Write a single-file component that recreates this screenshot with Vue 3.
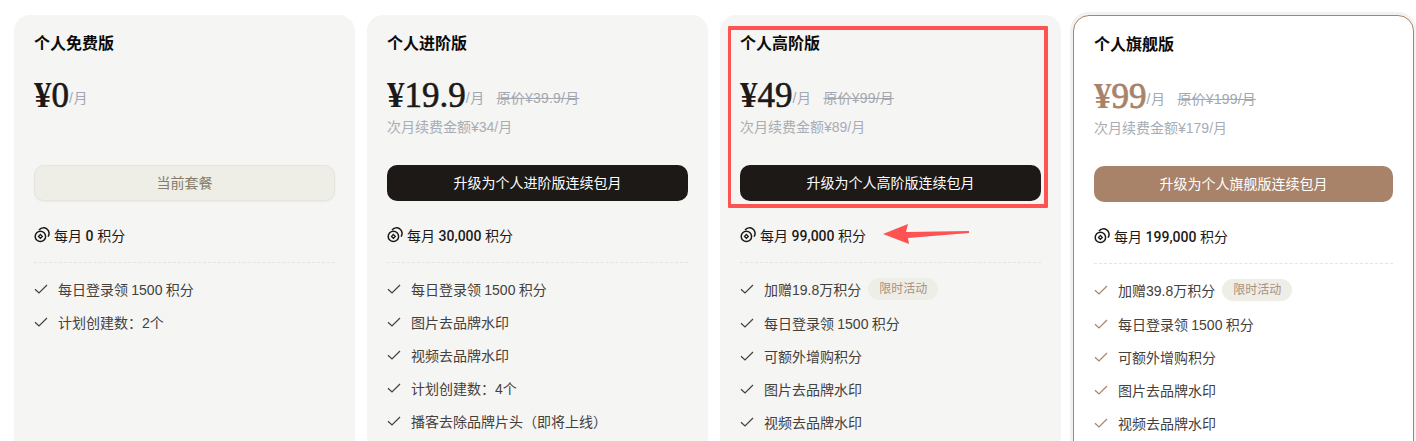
<script setup>
const plans = [
	{
		name: "个人免费版",
		price: "0",
		renew: "",
		action: "当前套餐",
		credits: "0",
		features: [{ text: "每日登录领 1500 积分" }, { text: "计划创建数：2个" }],
		kind: "current",
	},
	{
		name: "个人进阶版",
		price: "19.9",
		was: "原价¥39.9/月",
		renew: "次月续费金额¥34/月",
		action: "升级为个人进阶版连续包月",
		credits: "30,000",
		features: [
			{ text: "每日登录领 1500 积分" },
			{ text: "图片去品牌水印" },
			{ text: "视频去品牌水印" },
			{ text: "计划创建数：4个" },
			{ text: "播客去除品牌片头（即将上线）" },
		],
		kind: "dark",
	},
	{
		name: "个人高阶版",
		price: "49",
		was: "原价¥99/月",
		renew: "次月续费金额¥89/月",
		action: "升级为个人高阶版连续包月",
		credits: "99,000",
		features: [
			{ text: "加赠19.8万积分", tag: "限时活动" },
			{ text: "每日登录领 1500 积分" },
			{ text: "可额外增购积分" },
			{ text: "图片去品牌水印" },
			{ text: "视频去品牌水印" },
		],
		kind: "dark",
	},
	{
		name: "个人旗舰版",
		price: "99",
		was: "原价¥199/月",
		renew: "次月续费金额¥179/月",
		action: "升级为个人旗舰版连续包月",
		credits: "199,000",
		features: [
			{ text: "加赠39.8万积分", tag: "限时活动" },
			{ text: "每日登录领 1500 积分" },
			{ text: "可额外增购积分" },
			{ text: "图片去品牌水印" },
			{ text: "视频去品牌水印" },
		],
		kind: "gold",
	},
]
</script>

<template>
	<div class="page">
		<section v-for="plan in plans" :key="plan.name" class="card" :class="`card--${plan.kind}`">
			<h3 class="name">{{ plan.name }}</h3>
			<div class="price-row">
				<span class="price"><i class="yen">¥</i>{{ plan.price }}</span>
				<span class="unit">/月</span>
				<s v-if="plan.was" class="was">{{ plan.was }}</s>
			</div>
			<div class="renew">{{ plan.renew }}</div>
			<button class="action" type="button">{{ plan.action }}</button>
			<div class="credits">
				<svg class="coin" viewBox="0 0 16 16" fill="none" stroke="currentColor">
					<circle cx="6.4" cy="9.4" r="5.2" stroke-width="1.5" />
					<path d="M6.4 7.5 8.3 9.4 6.4 11.3 4.5 9.4Z" stroke-width="1.3" />
					<path d="M5 3.1A5.4 5.4 0 0 1 14 9.6" stroke-width="1.5" />
				</svg>
				<span>每月 <b>{{ plan.credits }}</b> 积分</span>
			</div>
			<ul class="features">
				<li v-for="item in plan.features" :key="item.text">
					<svg class="check" viewBox="0 0 14 14" fill="none" stroke="currentColor" stroke-width="1.2">
						<path d="M1 7.2 5 11 13 3" />
					</svg>
					<span>{{ item.text }}</span>
					<em v-if="item.tag" class="tag">{{ item.tag }}</em>
				</li>
			</ul>
		</section>

		<!-- annotation drawn on top of the screenshot -->
		<div class="mark-box"></div>
		<svg class="mark-arrow" viewBox="0 0 90 24">
			<path d="M0 11 25 1 23 9 86 8 86 10 25 15 26 21Z" fill="#ff5252" />
		</svg>
	</div>
</template>

<style scoped>
.page {
	position: relative;
	display: grid;
	grid-template-columns: repeat(4, 341px);
	gap: 12px;
	height: 441px;
	padding: 15px 0 0 14px;
	box-sizing: border-box;
	overflow: hidden;
	background: #fff;
	font-family: "Liberation Sans", "Noto Sans CJK SC", sans-serif;
}
.card {
	height: 500px;
	padding: 21px 20px;
	box-sizing: border-box;
	border-radius: 16px;
	background: #f5f5f3;
}
.card--gold {
	border: 1px solid #a98369;
	background: #fff;
	box-shadow: 0 0 0 3px #f2f2f2;
}
.name {
	margin: 0;
	font-size: 16px;
	line-height: 16px;
	font-weight: 700;
	color: #0b0b0b;
}
.price-row {
	display: flex;
	align-items: flex-end;
	height: 40px;
	margin-top: 24px;
}
.price {
	font-family: "Liberation Serif", serif;
	font-size: 35px;
	line-height: 40px;
	font-weight: 400;
	-webkit-text-stroke: 0.6px currentColor;
	color: #1c1917;
}
.yen {
	font-style: normal;
	font-weight: 700;
	-webkit-text-stroke: 0;
}
.card--gold .price {
	color: #a98369;
	-webkit-text-stroke: 0.8px currentColor;
}
.unit,
.was {
	margin-bottom: 8px;
	font-size: 14px;
	line-height: 20px;
	color: #a3a7b0;
}
.unit {
	letter-spacing: 0.5px;
}
.was {
	margin-left: 12px;
	letter-spacing: 0.2px;
}
.renew {
	height: 20px;
	margin-top: 1px;
	font-size: 14px;
	line-height: 20px;
	color: #a8acb4;
}
.action {
	display: block;
	width: 100%;
	height: 36px;
	margin-top: 28px;
	padding: 0 0 2px;
	border: 0;
	border-radius: 10px;
	background: #1c1917;
	color: #fff;
	font: inherit;
	font-size: 14px;
}
.card--current .action {
	border: 1px solid #e4e4e0;
	background: #eeede6;
	color: #857b68;
	box-shadow: 0 1px 2px rgba(0, 0, 0, 0.05);
}
.card--gold .action {
	background: #a98369;
}
.credits {
	display: flex;
	align-items: center;
	gap: 4px;
	height: 20px;
	padding: 24px 0 17px;
	border-bottom: 1px dashed #e4e4e2;
	font-size: 14px;
	word-spacing: -0.3px;
	color: #1c1917;
}
.credits b {
	font-family: Roboto, sans-serif;
	font-weight: 500;
}
.coin {
	width: 16px;
	height: 16px;
	flex: none;
}
.features {
	display: flex;
	flex-direction: column;
	gap: 12px;
	margin: 0;
	padding: 15px 0 0;
	list-style: none;
}
.features li {
	display: flex;
	align-items: center;
	min-height: 21px;
	font-size: 14px;
	word-spacing: -0.6px;
	color: #44403c;
}
.check {
	width: 14px;
	height: 14px;
	flex: none;
	margin-right: 10px;
	color: #44403c;
}
.card--gold .check {
	color: #a98369;
}
.tag {
	margin-left: 7px;
	padding: 0 11px;
	border-radius: 11px;
	background: #eeede6;
	color: #a8917f;
	font-size: 12px;
	font-style: normal;
	line-height: 22px;
}
.mark-box {
	position: absolute;
	left: 728px;
	top: 26px;
	width: 320px;
	height: 182px;
	box-sizing: border-box;
	border: 4px solid #ff5252;
	border-left-width: 3px;
	border-radius: 1px;
}
.mark-arrow {
	position: absolute;
	left: 883px;
	top: 223px;
	width: 90px;
	height: 24px;
}
</style>

<style>
html,
body {
	margin: 0;
	overflow: hidden;
}
</style>
